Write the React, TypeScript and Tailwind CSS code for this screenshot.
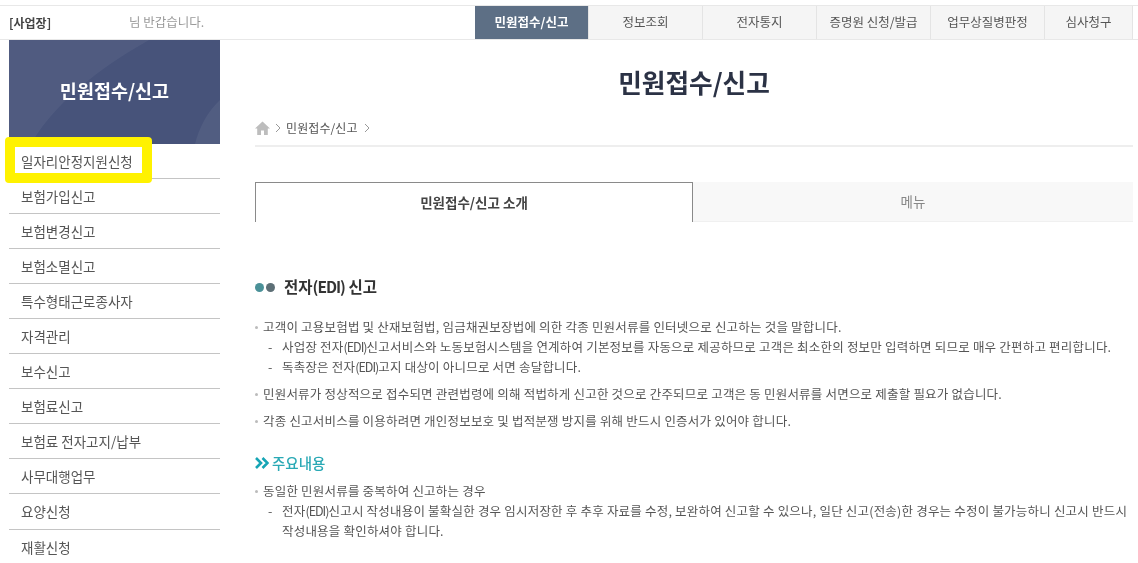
import React from 'react'

const gnb = ['민원접수/신고', '정보조회', '전자통지', '증명원 신청/발급', '업무상질병판정', '심사청구']

const menus = [
  '일자리안정지원신청',
  '보험가입신고',
  '보험변경신고',
  '보험소멸신고',
  '특수형태근로종사자',
  '자격관리',
  '보수신고',
  '보험료신고',
  '보험료 전자고지/납부',
  '사무대행업무',
  '요양신청',
  '재활신청',
]

function Edi() {
  return <span className="tracking-[-1px]">(EDI)</span>
}

function Bullet({ children }: { children: React.ReactNode }) {
  return (
    <div className="flex h-[20px] items-center">
      <span className="mr-[5px] h-[3px] w-[3px] rounded-full bg-[#bbbbbb]" />
      <span>{children}</span>
    </div>
  )
}

function Dash({ children }: { children: React.ReactNode }) {
  return (
    <div className="flex pl-[13px]">
      <span className="w-[14px] shrink-0">-</span>
      <span>{children}</span>
    </div>
  )
}

export default function App() {
  return (
    <div className="relative h-[563px] w-[1138px] overflow-hidden bg-white pt-[5px] font-['Noto_Sans_CJK_KR','Noto_Sans',sans-serif] text-[#555555] blur-[0.35px]">
      {/* Top bar */}
      <div className="flex h-[35px] border-y border-[#e8e8e8]">
        <div className="flex w-[475px] shrink-0 items-center pl-[9px]">
          <span className="w-[120px] text-[12px] font-bold text-[#444444]">[사업장]</span>
          <span className="text-[12.5px] text-[#999999]">님 반갑습니다.</span>
        </div>
        <div className="mr-[5px] flex flex-1 bg-[#f5f5f5]">
          {gnb.map((item, i) => (
            <div
              key={item}
              className={`flex h-full items-center justify-center border-r border-[#e4e4e4] text-[12.5px] ${
                i === 0 ? 'w-[114px] bg-[#5d6f85] font-bold text-white' : i === 5 ? 'flex-1 text-[#555555]' : 'w-[114px] text-[#555555]'
              }`}
            >
              {item}
            </div>
          ))}
        </div>
      </div>

      <div className="flex">
        {/* Sidebar */}
        <div className="ml-[9px] w-[211px] shrink-0">
          <div className="relative flex h-[104px] items-center justify-center overflow-hidden bg-[#47537a]">
            <svg className="absolute inset-0" width="211" height="104" viewBox="0 0 211 104">
              <path d="M0 0H140C105 20 50 55 22 104H0Z" fill="#ffffff" fillOpacity="0.05" />
              <path d="M211 60C198 72 190 88 186 104H211Z" fill="#ffffff" fillOpacity="0.06" />
            </svg>
            <span className="relative -mt-[3px] text-[18.5px] font-bold text-white">민원접수/신고</span>
          </div>
          {menus.map((menu) => (
            <div key={menu} className="flex h-[35.05px] items-center border-b border-[#c4c4c4] pl-[12px] text-[13.5px] text-[#555555] last:border-b-0">
              {menu}
            </div>
          ))}
        </div>

        {/* Contents */}
        <div className="ml-[35px] w-[878px]">
          <h1 className="mt-[24px] text-center text-[25.7px] leading-[36px] font-bold text-[#2b3245]">민원접수/신고</h1>
          <div className="mt-[12px] flex h-[35px] items-center border-b-2 border-[#eeeeee] pb-[2px] text-[12px] tracking-[0.1px] text-[#555555]">
            <svg width="15" height="14" viewBox="0 0 15 14">
              <path d="M7.5 0.5 0 7.5H2.2V14H6V9.5H9V14H12.8V7.5H15Z" fill="#bdbdbd" />
            </svg>
            <svg className="mx-[5px]" width="6" height="10" viewBox="0 0 6 10" fill="none" stroke="#999999">
              <path d="M1 1 5 5 1 9" />
            </svg>
            <span>민원접수/신고</span>
            <svg className="ml-[6px]" width="6" height="10" viewBox="0 0 6 10" fill="none" stroke="#999999">
              <path d="M1 1 5 5 1 9" />
            </svg>
          </div>

          <div className="mt-[35px] flex h-[40px] text-[13.5px]">
            <div className="flex w-[438px] items-center justify-center border-x border-t border-[#8a8a8a] font-bold text-[#444444]">민원접수/신고 소개</div>
            <div className="flex flex-1 items-center justify-center border-b border-[#f0f0f0] bg-[#f8f8f8] text-[#888888]">메뉴</div>
          </div>

          <h2 className="mt-[52px] flex h-[26px] items-center text-[15.5px] font-bold text-[#333333]">
            <span className="h-[9px] w-[9px] rounded-full bg-[#4a9198]" />
            <span className="ml-[2px] h-[9px] w-[9px] rounded-full bg-[#5d6f76]" />
            <span className="ml-[9px]">
              전자<Edi /> 신고
            </span>
          </h2>

          <div className="mt-[17px] text-[12.5px] leading-[20px] tracking-[0.2px]">
            <Bullet>고객이 고용보험법 및 산재보험법, 임금채권보장법에 의한 각종 민원서류를 인터넷으로 신고하는 것을 말합니다.</Bullet>
            <Dash>
              사업장 전자<Edi />신고서비스와 노동보험시스템을 연계하여 기본정보를 자동으로 제공하므로 고객은 최소한의 정보만 입력하면 되므로 매우 간편하고 편리합니다.
            </Dash>
            <Dash>
              독촉장은 전자<Edi />고지 대상이 아니므로 서면 송달합니다.
            </Dash>
            <div className="mt-[7px]">
              <Bullet>민원서류가 정상적으로 접수되면 관련법령에 의해 적법하게 신고한 것으로 간주되므로 고객은 동 민원서류를 서면으로 제출할 필요가 없습니다.</Bullet>
            </div>
            <div className="mt-[7px]">
              <Bullet>각종 신고서비스를 이용하려면 개인정보보호 및 법적분쟁 방지를 위해 반드시 인증서가 있어야 합니다.</Bullet>
            </div>
          </div>

          <h3 className="mt-[20px] flex h-[24px] items-center text-[14.5px] font-medium text-[#2aa9b5]">
            <svg width="14" height="12" viewBox="0 0 14 12" fill="none" stroke="#16a5b5" strokeWidth="2.6">
              <path d="M1 1 6 6 1 11M7.5 1 12.5 6 7.5 11" />
            </svg>
            <span className="ml-[3px]">주요내용</span>
          </h3>

          <div className="mt-[6px] text-[12.5px] leading-[20px] tracking-[0.2px]">
            <Bullet>동일한 민원서류를 중복하여 신고하는 경우</Bullet>
            <Dash>
              전자<Edi />신고시 작성내용이 불확실한 경우 임시저장한 후 추후 자료를 수정, 보완하여 신고할 수 있으나, 일단 신고(전송)한 경우는 수정이 불가능하니 신고시 반드시 작성내용을 확인하셔야 합니다.
            </Dash>
          </div>
        </div>
      </div>

      {/* Highlight box */}
      <div className="absolute top-[137px] left-[5px] h-[46px] w-[147px] rounded-[4px] border-[10px] border-[#fff200]" />
    </div>
  )
}
